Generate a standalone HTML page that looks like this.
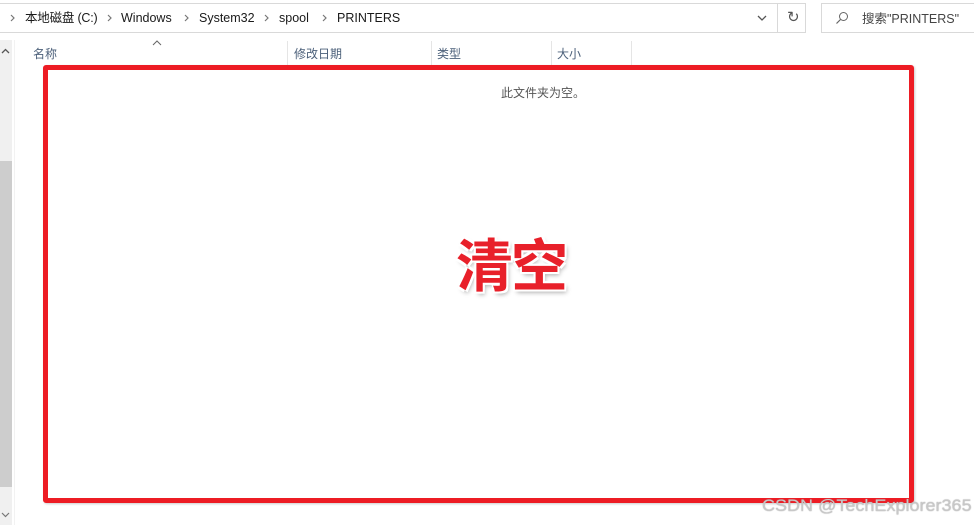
<!DOCTYPE html>
<html><head><meta charset="utf-8"><style>
body{margin:0;width:974px;height:525px;background:#fff;position:relative;overflow:hidden;font-family:"Liberation Sans","Noto Sans CJK SC",sans-serif;}
.a{position:absolute}
.t{font-size:12.5px;color:#1a1a1a;white-space:nowrap;line-height:16px;height:16px}
.h{font-size:12px;color:#4c607a;white-space:nowrap;line-height:16px}
.sep{position:absolute;top:41px;width:1px;height:24px;background:#e5e5e5}
</style></head><body>
<div class="a" style="left:0;top:3px;width:806px;height:30px;border:1px solid #d9d9d9;border-left:none;box-sizing:border-box"></div>
<div class="a" style="left:777px;top:3px;width:1px;height:30px;background:#d9d9d9"></div>
<div class="a" style="left:821px;top:3px;width:160px;height:30px;border:1px solid #d9d9d9;box-sizing:border-box"></div>
<svg class="a" style="left:0;top:13px" width="340" height="10"><g fill="none" stroke="#777" stroke-width="1.2"><path d="M11 2l3 3-3 3M108 2l3 3-3 3M185 2l3 3-3 3M265 2l3 3-3 3M323 2l3 3-3 3"/></g></svg>
<div class="a t" style="left:25px;top:10px;letter-spacing:-0.2px">本地磁盘 (C:)</div>
<div class="a t" style="left:121px;top:10px">Windows</div>
<div class="a t" style="left:199px;top:10px">System32</div>
<div class="a t" style="left:279px;top:10px">spool</div>
<div class="a t" style="left:337px;top:10px">PRINTERS</div>
<svg class="a" style="left:757px;top:14px" width="10" height="8"><path d="M1 2l4 4 4-4" fill="none" stroke="#555" stroke-width="1.3"/></svg>
<div class="a" style="left:787px;top:8px;font-size:15px;color:#555">↻</div>
<svg class="a" style="left:835px;top:11px" width="14" height="14"><circle cx="8.5" cy="5.5" r="4" fill="none" stroke="#666" stroke-width="1"/><path d="M5.5 8.5L1.5 12.5" stroke="#666" stroke-width="1.2"/></svg>
<div class="a t" style="left:862px;top:11px;color:#444">搜索"PRINTERS"</div>
<div class="a" style="left:0;top:40px;width:12px;height:485px;background:#f0f0f0"></div>
<div class="a" style="left:0;top:161px;width:12px;height:326px;background:#cdcdcd"></div>
<svg class="a" style="left:1px;top:48px" width="9" height="6"><path d="M1 5l3.5-3.5L8 5" fill="none" stroke="#555" stroke-width="1.3"/></svg>
<svg class="a" style="left:1px;top:512px" width="9" height="6"><path d="M1 1l3.5 3.5L8 1" fill="none" stroke="#777" stroke-width="1.2"/></svg>
<div class="a" style="left:14px;top:40px;width:1px;height:485px;background:#f2f2f2"></div>
<svg class="a" style="left:152px;top:40px" width="10" height="6"><path d="M1 5l4-4 4 4" fill="none" stroke="#666" stroke-width="1"/></svg>
<div class="a h" style="left:33px;top:46px">名称</div>
<div class="sep" style="left:287px"></div>
<div class="a h" style="left:294px;top:46px">修改日期</div>
<div class="sep" style="left:431px"></div>
<div class="a h" style="left:437px;top:46px">类型</div>
<div class="sep" style="left:551px"></div>
<div class="a h" style="left:557px;top:46px">大小</div>
<div class="sep" style="left:631px"></div>
<div class="a" style="left:43px;top:65px;width:871px;height:438px;border:5px solid #ed1c24;border-radius:3px;box-sizing:border-box;box-shadow:1px 1px 2px rgba(0,0,0,.2)"></div>
<div class="a" style="left:501px;top:84px;font-size:12px;color:#555">此文件夹为空。</div>
<div class="a" style="left:456px;top:232px;font-size:57px;font-weight:bold;color:#e8202a;line-height:70px;letter-spacing:-2px;text-shadow:0 0 3px #fff,2px 2px 0 #fff,-2px -2px 0 #fff,2px -2px 0 #fff,-2px 2px 0 #fff,2px 3px 5px rgba(0,0,0,.35)">清空</div>
<div class="a" style="left:762px;top:496px;font-size:17px;color:#c8c8c8;transform:scaleX(1.06);transform-origin:left;text-shadow:0 0 1px #999;white-space:nowrap">CSDN @TechExplorer365</div>
</body></html>
